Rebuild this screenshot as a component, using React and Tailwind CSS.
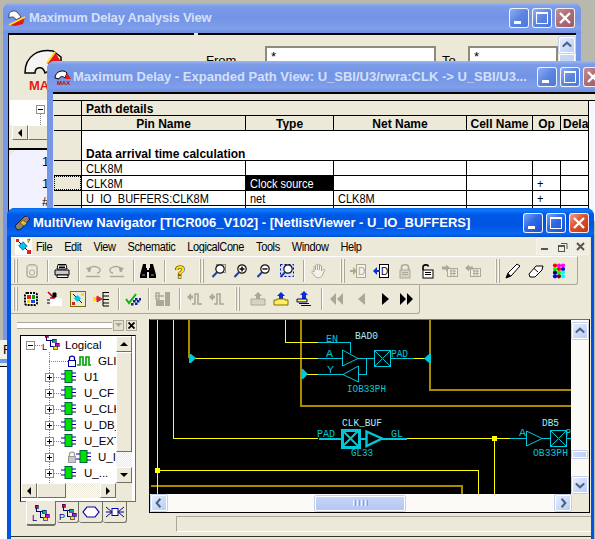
import React from "react";

const SANS = "[font-family:'Liberation_Sans',Arial,sans-serif]";
const DIS = "#aca899";

function TitleButton({ kind, active, className = "" }) {
  const base = active
    ? kind === "close"
      ? "bg-[linear-gradient(135deg,#f0a08a,#e0512c_45%,#c1340f)]"
      : "bg-[linear-gradient(135deg,#7aa5f5,#2f6ae6_45%,#1d4fd0)]"
    : kind === "close"
      ? "bg-[linear-gradient(135deg,#c48e96,#ad6a76_50%,#9c5a6a)]"
      : "bg-[linear-gradient(135deg,#8eaef0,#5c85e2_50%,#4f78d8)]";
  return (
    <div className={`w-[20px] h-[20px] shrink-0 rounded-[3px] border border-white/90 ${base} ${className}`}>
      <svg width="18" height="18" viewBox="0 0 18 18" shapeRendering="crispEdges">
        {kind === "min" && <rect x="4" y="12" width="7" height="3" fill="#fff" />}
        {kind === "max" && (
          <g fill="none" stroke="#fff">
            <rect x="3.5" y="4.5" width="11" height="10" />
            <rect x="3" y="3" width="12" height="2" fill="#fff" stroke="none" />
          </g>
        )}
        {kind === "close" && (
          <path d="M4 4 L14 14 M14 4 L4 14" stroke="#fff" strokeWidth="2.4" shapeRendering="auto" />
        )}
      </svg>
    </div>
  );
}

function LunaArrow({ dir, className = "" }) {
  const paths = {
    up: "M3 9 L7.5 5 L12 9",
    down: "M3 6 L7.5 10 L12 6",
    left: "M9 3 L5 7.5 L9 12",
    right: "M6 3 L10 7.5 L6 12",
  };
  return (
    <div className={`w-[16px] h-[16px] shrink-0 rounded-[2px] border border-white bg-[linear-gradient(135deg,#e4ecfd,#b8cdf8)] shadow-[0_0_0_1px_#c4d0ea] ${className}`}>
      <svg width="14" height="14" viewBox="0 0 15 15">
        <path d={paths[dir]} fill="none" stroke="#4d6185" strokeWidth="2.2" />
      </svg>
    </div>
  );
}

function ClassicArrow({ dir, className = "" }) {
  const p = {
    up: "M3 9 H11 L7 5 Z",
    down: "M3 5 H11 L7 9 Z",
    left: "M9 3 V11 L5 7 Z",
    right: "M5 3 V11 L9 7 Z",
  };
  return (
    <div className={`bg-[#ece9d8] border border-t-white border-l-white border-r-[#716f64] border-b-[#716f64] flex items-center justify-center shrink-0 ${className}`}>
      <svg width="14" height="14" viewBox="0 0 14 14"><path d={p[dir]} fill="#000" /></svg>
    </div>
  );
}

const I = ({ children, className = "" }) => (
  <svg width="16" height="16" viewBox="0 0 16 16" className={`shrink-0 ${className}`}>{children}</svg>
);

const Grip = ({ className = "" }) => (
  <div className={`w-[6px] h-[24px] shrink-0 flex gap-[1px] ${className}`}>
    <div className="w-[2px] h-full bg-[#f8f6ee] border-r border-[#aca899]" />
    <div className="w-[2px] h-full bg-[#f8f6ee] border-r border-[#aca899]" />
  </div>
);
const Sep = ({ className = "" }) => (
  <div className={`w-[2px] h-[22px] shrink-0 border-l border-[#aca899] border-r border-r-white ${className}`} />
);

const Zoom = ({ mark }) => (
  <>
    {mark === "dash" && <rect x="5.5" y="1.5" width="9" height="8" fill="none" stroke="#333" strokeDasharray="1 1" />}
    {mark === "fit" && <rect x="1.5" y="1.5" width="13" height="12" fill="#cfe0ff" stroke="#00a" strokeDasharray="2 2" />}
    <circle cx="9" cy="6" r="4.2" fill="#fff" stroke="#111" strokeWidth="1.2" />
    {mark === "plus" && <path d="M6.5 6 H11.5 M9 3.5 V8.5" stroke="#000" strokeWidth="1.4" />}
    {mark === "minus" && <path d="M6.5 6 H11.5" stroke="#000" strokeWidth="1.4" />}
    <path d="M6 9.2 L1.5 14" stroke="#1c3fa8" strokeWidth="2" />
  </>
);

const Lock = ({ color, open }) => (
  <>
    <path d={open ? "M3 7 V4 C3 1.5 8 1 8.5 3.5" : "M4.5 7 V4 C4.5 1 11.5 1 11.5 4 V7"} fill="none" stroke={color} strokeWidth="1.6" />
    <rect x="3" y="7" width="10" height="8" fill={open ? "#fff" : "#d6d3c4"} stroke={color} />
    <path d="M5 9.5 H11 M5 11.5 H11" stroke={color} />
  </>
);

const GridArrow = ({ left }) => (
  <>
    <rect x="5.5" y="5.5" width="10" height="8" fill="#f0eee2" stroke={DIS} />
    <path d="M8 8 H14 M8 10.5 H14 M9 6 V13 M12 6 V13" stroke={DIS} />
    <path d={left ? "M0 5 L4 1.5 V3.5 H8 V6.5 H4 V8.5 Z" : "M8 5 L4 1.5 V3.5 H0 V6.5 H4 V8.5 Z"} fill={DIS} />
  </>
);

const Pulse = ({ arrow = true }) => (
  <>
    <path d="M5 13 H8 V3 H11 V13 H15" fill="none" stroke={DIS} strokeWidth="1.6" />
    {arrow && <path d="M0 6 L4 2 V4.5 H6 V7.5 H4 V10 Z" fill={DIS} />}
  </>
);

const TreeGlyph = ({ letter }) => (
  <svg width="18" height="18" viewBox="0 0 18 18" className="shrink-0" shapeRendering="crispEdges">
    <path d="M4.5 3 V7.5 H10 M8.5 7.5 V13.5 H11" fill="none" stroke="#000080" />
    <rect x="3" y="1" width="3" height="3" fill="#e00030" stroke="#000080" strokeWidth="0.6" />
    <rect x="10" y="6" width="4" height="3" fill="#00b070" stroke="#000080" strokeWidth="0.6" />
    <rect x="13" y="10" width="4" height="3" fill="#e000c0" stroke="#000080" strokeWidth="0.6" />
    <rect x="11" y="13" width="4" height="3" fill="#ffe000" stroke="#000080" strokeWidth="0.6" />
    <text x="0" y="17" fontSize="9" fill="#0000a0" fontFamily="Liberation Sans">{letter}</text>
  </svg>
);

const Block = () => (
  <svg width="15" height="14" viewBox="0 0 15 14" className="shrink-0">
    <rect x="4" y="0.5" width="7" height="12" fill="#00e000" stroke="#063" />
    <path d="M0 4 H4 M0 9 H4 M11 3 H15 M11 6.5 H15 M11 10 H15" stroke="#00a" />
  </svg>
);

const SmallLock = ({ color, fill }) => (
  <svg width="8" height="12" viewBox="0 0 8 12" className="shrink-0">
    <path d="M1.5 6 V3 C1.5 0.5 6.5 0.5 6.5 3 V6" fill="none" stroke={color} strokeWidth="1.3" />
    <rect x="0.5" y="5.5" width="7" height="6" fill={fill} stroke={color} />
  </svg>
);

const PlusBox = () => (
  <div className="w-[9px] h-[9px] bg-white border border-[#8e8f8f] shrink-0 relative">
    <div className="absolute left-[1px] top-[3px] w-[5px] h-[1px] bg-black" />
    <div className="absolute left-[3px] top-[1px] w-[1px] h-[5px] bg-black" />
  </div>
);
const Dots = () => <div className="w-[7px] border-t border-dotted border-[#808080] shrink-0" />;

const Tall = ({ children, className = "" }) => (
  <span className={`inline-block scale-y-[1.14] ${className}`}>{children}</span>
);

function TreeRow({ label, children }) {
  return (
    <div className="h-[16px] flex items-center pl-[24px] whitespace-nowrap">
      <PlusBox />
      <Dots />
      {children}
      <span className="ml-[8px] leading-[16px]">{label}</span>
    </div>
  );
}

function Schematic() {
  const olive = "#a88c00";
  const yellow = "#ffff00";
  const cyan = "#00c8d8";
  const pale = "#a8f0f4";
  const T = ({ x, y, w, c = cyan, children }) => (
    <text x={x} y={y} fill={c} fontSize="11" fontFamily="Liberation Mono" textLength={w} lengthAdjust="spacingAndGlyphs">{children}</text>
  );
  return (
    <svg width="421" height="174" viewBox="150 320 421 174" className="block bg-black shrink-0" shapeRendering="crispEdges">
      <g fill="none" stroke={olive} strokeWidth="2">
        <path d="M189 320 V358" />
        <path d="M301 320 V405.5 H571" />
        <path d="M430 320 V390 H571" />
        <path d="M151 486 H462 V494" />
      </g>
      <g fill="none" stroke={yellow}>
        <path d="M157.5 320 V494" />
        <path d="M173.5 320 V438.5 H318" />
        <path d="M191 358.5 H318" />
        <path d="M285.5 320 V342.5 H318" />
        <path d="M303 374.5 H318" />
        <path d="M414 358.5 H427" />
        <path d="M407 438.5 H510" />
        <path d="M494.5 438 V494" />
        <path d="M157 470.5 H478.5 V494" />
      </g>
      <rect x="155" y="468" width="5" height="5" fill={yellow} />
      <rect x="492" y="436" width="5" height="5" fill={yellow} />
      <g fill={cyan}>
        <path d="M189 354 H191 L196 358 L191 363 H189 Z" shapeRendering="auto" />
        <path d="M301 369 H303 L308 374 L303 379 H301 Z" shapeRendering="auto" />
        <path d="M431 354 V363 H429 L424 358.5 L429 354 Z" shapeRendering="auto" />
      </g>
      <g fill="none" stroke={cyan}>
        <path d="M318 342.5 H350.5 V353" />
        <path d="M318 358.5 H342" />
        <path d="M342.5 350 V366 L358 358.5 Z" shapeRendering="auto" />
        <path d="M358 358.5 H374" />
        <rect x="374.5" y="350.5" width="16" height="16" />
        <path d="M374.5 350.5 L390.5 366.5 M390.5 350.5 L374.5 366.5" shapeRendering="auto" />
        <path d="M390 358.5 H414" />
        <path d="M318 374.5 H343" />
        <path d="M358.5 366 V382 L343 374.5 Z" shapeRendering="auto" />
        <path d="M358 374.5 H366.5 V358.5" />
        <path d="M510 438.5 H526" />
        <path d="M526.5 431 V446 L542 438.5 Z" shapeRendering="auto" />
        <path d="M542 438.5 H550" />
        <rect x="550.5" y="430.5" width="16" height="16" />
        <path d="M550.5 430.5 L566.5 446.5 M566.5 430.5 L550.5 446.5" shapeRendering="auto" />
        <path d="M566 438.5 H571" />
      </g>
      <g fill="none" stroke={cyan} strokeWidth="2">
        <path d="M319 438.5 H342" />
        <rect x="342" y="430" width="17" height="17" strokeWidth="3" />
        <path d="M343 431 L358 446 M358 431 L343 446" shapeRendering="auto" />
        <path d="M359 438.5 H366" />
        <path d="M366.5 431.5 V446 L382 438.5 Z" strokeWidth="2.4" shapeRendering="auto" />
        <path d="M382 438.5 H407" />
      </g>
      <T x={326} y={342} w={12}>EN</T>
      <T x={355} y={339} w={23} c={pale}>BAD0</T>
      <T x={326} y={357} w={7}>A</T>
      <T x={391} y={357} w={17}>PAD</T>
      <T x={327} y={373} w={7}>Y</T>
      <T x={347} y={392} w={39}>IOB33PH</T>
      <T x={342} y={426} w={40} c={pale}>CLK_BUF</T>
      <T x={317} y={437} w={18}>PAD</T>
      <T x={391} y={437} w={12}>GL</T>
      <T x={351} y={456} w={22}>GL33</T>
      <T x={542} y={426} w={17} c={pale}>DB5</T>
      <T x={519} y={436} w={7}>A</T>
      <T x={566} y={436} w={5}>P</T>
      <T x={533} y={456} w={35}>OB33PH</T>
    </svg>
  );
}

const inactiveTitle =
  "bg-[linear-gradient(180deg,#9db6f0_0%,#7b9be8_12%,#7394e6_50%,#7f9fea_85%,#6f8fe0_100%)]";
const activeTitle =
  "bg-[linear-gradient(180deg,#0a66e8_0%,#0a7af8_8%,#0058e6_22%,#0054e3_60%,#0468f2_88%,#0050d0_100%)]";

function Window1() {
  return (
    <div className={`absolute left-[3px] top-[3px] w-[578px] h-[337px] rounded-t-[8px] bg-[#7697e7] overflow-hidden flex flex-col ${SANS}`}>
      <div className={`h-[30px] shrink-0 flex items-center pl-[5px] pr-[6px] ${inactiveTitle}`}>
        <svg width="18" height="18" viewBox="0 0 18 18" className="shrink-0">
          <path d="M1 6 C1 2 6 1 9 3 L13 8 L8 11 C7 8 4 7 1 9 Z" fill="#fff" stroke="#000" strokeWidth="0.6" />
          <path d="M1 16 L17 8 L15 15 L7 17 Z" fill="#e81818" />
          <path d="M1 16 L17 8" stroke="#ffe020" strokeWidth="1.6" />
        </svg>
        <span className="ml-[3px] text-[13px] tracking-[-0.2px] font-bold text-[#d4e0fa] whitespace-nowrap">Maximum Delay Analysis View</span>
        <div className="ml-auto flex gap-[3px]">
          <TitleButton kind="min" />
          <TitleButton kind="max" />
          <TitleButton kind="close" />
        </div>
      </div>
      <div className="flex-1 flex mx-[5px] gap-[4px] bg-[#ece9d8] min-h-0">
        <div className="w-[186px] shrink-0 flex flex-col border-t-2 border-l border-black">
          <div className="h-[65px] shrink-0 relative pl-[14px] pt-[12px]">
            <svg width="40" height="30" viewBox="0 0 40 30">
              <path d="M2 26 C2 8 16 2 30 4 L38 10 L38 18 L22 26 C20 18 12 20 12 26 Z" fill="#f4f4f0" stroke="#000" strokeWidth="1.5" />
              <path d="M32 5 L24 16 L30 24 L44 24 Z" fill="#e81818" />
              <path d="M32 5 L24 16" stroke="#ffe020" strokeWidth="2" />
            </svg>
            <span className="absolute left-[20px] top-[41px] text-[13px] font-bold text-[#e81818]">MAX</span>
          </div>
          <div className="h-[25px] shrink-0 bg-white relative ml-[1px]">
            <div className="absolute left-[26px] top-[5px] w-[9px] h-[9px] border border-[#8e8f8f] bg-white">
              <div className="mt-[3px] ml-[1px] w-[5px] h-[1px] bg-black" />
            </div>
            <div className="absolute left-[30px] top-[14px] h-[11px] border-l border-dotted border-[#808080]" />
          </div>
          <div className="h-[15px] shrink-0 flex pl-[3px]">
            <ClassicArrow dir="left" className="w-[16px] h-[15px]" />
            <div className="w-[40px] h-[15px] bg-[#ece9d8] border border-t-white border-l-white border-r-[#716f64] border-b-[#716f64]" />
          </div>
          <div className="h-[10px] shrink-0 border-b-2 border-black" />
          <div className="flex-1 bg-[#f1f1ff] rounded-tl-[10px] text-[13px] text-black pl-[33px] pt-[2px] leading-none">
            <div className="h-[22px] pt-[3px]">1</div>
            <div className="h-[21px] pt-[3px]">1</div>
            <div>#</div>
          </div>
        </div>
        <div className="flex-1 border-t-2 border-black flex items-start pl-[8px] pt-[11px] text-[13px] text-black">
          <span className="w-[59px] pt-[5px]">From</span>
          <div className="w-[171px] h-[40px] bg-white border-2 border-[#8e8b7c] pl-[4px] leading-[18px]">*</div>
          <span className="w-[32px] pl-[6px] pt-[5px]">To</span>
          <div className="w-[90px] h-[40px] bg-white border-2 border-[#8e8b7c] pl-[4px] leading-[18px]">*</div>
          <div className="ml-[1px] -mt-[9px] w-[16px] flex flex-col gap-[1px]">
            <LunaArrow dir="up" />
            <div className="h-[30px] bg-[#c6d5f6] border border-white" />
          </div>
        </div>
      </div>
    </div>
  );
}

function Cell({ children, className = "" }) {
  return (
    <div className={`px-[4px] leading-[14px] whitespace-nowrap overflow-hidden ${className}`}>
      <Tall>{children}</Tall>
    </div>
  );
}

function Window2() {
  const head = "bg-[#ece9d8] font-bold text-center text-[12px]";
  const w = "bg-white";
  const rh = "bg-[#ece9d8]";
  return (
    <div className={`absolute left-[47px] top-[61px] w-[560px] h-[160px] rounded-t-[8px] bg-[#7697e7] overflow-hidden flex flex-col ${SANS}`}>
      <div className={`h-[31px] shrink-0 flex items-center pl-[7px] ${inactiveTitle}`}>
        <svg width="18" height="18" viewBox="0 0 18 18" className="shrink-0">
          <path d="M1 10 C1 3 10 1 13 5 L11 10 C9 8 6 8 5 11 Z" fill="#fff" stroke="#000" />
          <path d="M13 5 L17 11 L11 11 Z" fill="#e81818" />
          <text x="3" y="17" fontSize="6" fontWeight="700" fill="#c00" fontFamily="Liberation Sans">MAX</text>
        </svg>
        <span className="ml-[1px] text-[13px] font-bold text-[#d4e0fa] whitespace-nowrap w-[460px] shrink-0">Maximum Delay - Expanded Path View: U_SBI/U3/rwra:CLK -&gt; U_SBI/U3...</span>
        <div className="ml-[4px] flex gap-[3px]">
          <TitleButton kind="min" />
          <TitleButton kind="max" />
          <TitleButton kind="close" />
        </div>
      </div>
      <div className="ml-[6px] flex-1 bg-[#ece9d8] border-t-2 border-black flex flex-col min-h-0">
        <div className="h-[7px] shrink-0 border-b border-black" />
        <div className="flex">
          <div className="ml-[1px] shrink-0 grid bg-black gap-[1px] text-[11px] text-black grid-cols-[27px_163px_87px_132px_65px_27px_27px] grid-rows-[14px_14px_29px_14px_14px_14px_14px] border-r border-black">
            <div className={rh} />
            <Cell className="col-span-6 bg-[#ece9d8] font-bold text-[12px]">Path details</Cell>
            <div className={rh} />
            <Cell className={head}>Pin Name</Cell>
            <Cell className={head}>Type</Cell>
            <Cell className={head}>Net Name</Cell>
            <Cell className={`${head} !px-0`}>Cell Name</Cell>
            <Cell className={`${head} !px-0`}>Op</Cell>
            <Cell className="bg-[#ece9d8] font-bold text-[12px] !px-[2px]">Delay</Cell>
            <div className={rh} />
            <Cell className="col-span-6 bg-white font-bold text-[12px] pt-[15px]">Data arrival time calculation</Cell>
            <div className={rh} />
            <Cell className={w}>CLK8M</Cell>
            <div className={w} /><div className={w} /><div className={w} /><div className={w} /><div className={w} />
            <div className="bg-[#ece9d8] border border-dotted border-black" />
            <Cell className={w}>CLK8M</Cell>
            <Cell className="bg-black text-white">Clock source</Cell>
            <div className={w} /><div className={w} />
            <Cell className={w}>+</Cell>
            <div className={w} />
            <div className={rh} />
            <Cell className={w}>U_IO_BUFFERS:CLK8M</Cell>
            <Cell className={w}>net</Cell>
            <Cell className={w}>CLK8M</Cell>
            <div className={w} />
            <Cell className={w}>+</Cell>
            <div className={w} />
            <div className={rh} />
            <div className={w} /><div className={w} /><div className={w} /><div className={w} /><div className={w} /><div className={w} />
          </div>
          <div className="flex-1 bg-[#f6f8fd]" />
        </div>
      </div>
    </div>
  );
}

function ToolbarOne() {
  return (
    <div className="h-[29px] w-[567px] shrink-0 flex items-center border-b border-r border-[#aca899] rounded-br-[3px] border-t border-t-white">
      <Grip className="ml-[2px]" />
      <I className="ml-[5px]"><ellipse cx="8" cy="3.5" rx="5" ry="2" fill="#d6d3c4" stroke={DIS} /><path d="M3 3.5 V12 C3 15 13 15 13 12 V3.5" fill="#ece9d8" stroke={DIS} strokeWidth="1.3" /><rect x="5.5" y="7" width="5" height="5" rx="2" fill="none" stroke={DIS} /></I>
      <Sep className="ml-[7px]" />
      <I className="ml-[5px]"><path d="M4 1.5 H12 L13 6 H3 Z" fill="#fff" stroke="#000" /><path d="M1 7 H15 V12 H1 Z" fill="#c8c8c8" stroke="#000" /><path d="M3 12 H14 V14.5 H3 Z" fill="#fff" stroke="#000" /><path d="M5 3 H11 M5 4.5 H11" stroke="#000" /></I>
      <Sep className="ml-[8px]" />
      <I className="ml-[5px]"><path d="M4 9 C1 4 9 2 14 5 C16 7 15 10 12 10" fill="none" stroke={DIS} strokeWidth="1.3" /><path d="M1 5 L5 9.5 L6.5 4 Z" fill={DIS} /><path d="M1 13.5 H15" stroke={DIS} strokeWidth="1.4" /></I>
      <I className="ml-[8px]"><path d="M12 9 C15 4 7 2 2 5 C0 7 1 10 4 10" fill="none" stroke={DIS} strokeWidth="1.3" /><path d="M15 5 L11 9.5 L9.5 4 Z" fill={DIS} /><path d="M1 13.5 H15" stroke={DIS} strokeWidth="1.4" /></I>
      <Sep className="ml-[8px]" />
      <I className="ml-[5px]"><path d="M3 1 H6 V5 H7 V7 H9 V5 H10 V1 H13 L16 12 V15 H9 V9 H7 V15 H0 V12 Z" fill="#000" /><rect x="2" y="11" width="3" height="2" fill="#4a4a4a" /><rect x="11" y="11" width="3" height="2" fill="#4a4a4a" /></I>
      <Sep className="ml-[8px]" />
      <I className="ml-[6px]"><text x="8" y="14.5" textAnchor="middle" fontSize="17" fontWeight="700" fill="#ffe800" stroke="#000" strokeWidth="0.9" paintOrder="stroke" fontFamily="Liberation Sans">?</text></I>
      <Grip className="ml-[11px]" />
      <I className="ml-[6px]"><Zoom mark="dash" /></I>
      <I className="ml-[6px]"><Zoom mark="plus" /></I>
      <I className="ml-[7px]"><Zoom mark="minus" /></I>
      <I className="ml-[7px]"><Zoom mark="fit" /></I>
      <Sep className="ml-[8px]" />
      <I className="ml-[5px]"><path d="M4 9 V4 C4 3 5.5 3 5.5 4 V7 V2.5 C5.5 1.5 7.5 1.5 7.5 2.5 V7 V2 C7.5 1 9.5 1 9.5 2 V7 V3 C9.5 2 11.5 2 11.5 3 V8 L13 6.5 C14 5.5 15 6.5 14.5 7.5 L12 13 C11 15 6 15.5 5 13 L2 9.5 C1.5 8 3 7.5 4 9 Z" fill="#f4f2e8" stroke={DIS} /></I>
      <Grip className="ml-[14px]" />
      <I className="ml-[4px]"><rect x="6.5" y="1.5" width="9" height="13" fill="#f4f2e8" stroke={DIS} /><text x="8" y="12" fontSize="10" fill={DIS} fontFamily="Liberation Sans">D</text><path d="M0 7 H3 V4 L7 8 L3 12 V9 H0 Z" fill={DIS} /></I>
      <I className="ml-[7px]"><rect x="6.5" y="1.5" width="9" height="13" fill="#fff" stroke="#000" /><text x="8" y="12" fontSize="10" fill="#000" fontFamily="Liberation Sans">D</text><path d="M7 7 H4 V4 L0 8 L4 12 V9 H7 Z" fill="#0a2fd0" /></I>
      <I className="ml-[8px]"><Lock color={DIS} /></I>
      <I className="ml-[7px]"><Lock color="#000" open /></I>
      <I className="ml-[6px]"><GridArrow /></I>
      <I className="ml-[7px]"><GridArrow left /></I>
      <Grip className="ml-[14px]" />
      <I className="ml-[4px]"><path d="M1 15 L3 10 L12 1 L15 3 L6 13 Z" fill="#fff" stroke="#000" /><path d="M1 15 L3 10 L6 13 Z" fill="#000" /></I>
      <I className="ml-[7px]"><path d="M1 11 L8 3 H15 L14 7 L7 14 H2 Z" fill="#fff" stroke="#000" /><path d="M6 5.5 L10 9" stroke="#000" /></I>
      <I className="ml-[7px]">
        {[["#ff0000","#ff00ff","#ff00ff"],["#00ff00","#ff0000","#0000ff"],["#000080","#00ff00","#00ffff"],["#0000ff","#800000","#00ffff"]].map((r, y) =>
          r.map((c, x) => <circle key={`${x}-${y}`} cx={4 + x * 4} cy={2.5 + y * 3.6} r="2.1" fill={c} />)
        )}
      </I>
    </div>
  );
}

function ToolbarTwo() {
  return (
    <div className="h-[29px] w-[409px] shrink-0 flex items-center border-b border-r border-[#aca899] rounded-br-[3px]">
      <Grip className="ml-[2px]" />
      <I className="ml-[4px]"><rect x="2" y="2" width="12" height="12" rx="2" fill="#fff" stroke="#000" strokeWidth="2" strokeDasharray="2 1" /><rect x="4" y="4" width="4" height="4" fill="#e02020" /><rect x="9" y="4" width="3" height="4" fill="#00a000" /><rect x="4" y="9" width="3" height="3" fill="#ffd000" /><rect x="8" y="9" width="4" height="3" fill="#2040e0" /></I>
      <I className="ml-[8px]"><rect x="3" y="7" width="12" height="8" fill="#fff" /><path d="M1 1 L7 7 M7 3 V7 H3" stroke="#b00020" strokeWidth="1.6" fill="none" /><path d="M0 9 H3 M0 12 H3 M6 2 H9 V6 H6 Z" fill="#000" stroke="#000" /></I>
      <I className="ml-[7px]"><rect x="0.5" y="0.5" width="15" height="15" fill="#ece9d8" stroke="#707000" /><path d="M3 3 L12 12" stroke="#00a" /><rect x="5" y="5" width="5" height="5" transform="rotate(45 7.5 7.5)" fill="#00c8e0" /><rect x="11" y="2" width="3" height="3" fill="#ffe000" /><rect x="2" y="11" width="3" height="3" fill="#e02020" /></I>
      <I className="ml-[7px]"><path d="M0 8 H4 V5 L9 8 L4 11 V8" fill="#e02020" stroke="#e02020" /><rect x="0" y="6" width="3" height="4" fill="#ffe000" /><path d="M10 1 V15 M10 1.5 H16 M10 5 H16 M10 8.5 H16 M10 12 H16 M10 15 H16" stroke="#000" fill="none" /></I>
      <Sep className="ml-[9px]" />
      <I className="ml-[5px]"><path d="M1 8 L4 12 L11 3" fill="none" stroke="#10b010" strokeWidth="2" /><g fill="#0a2a90"><rect x="8" y="9" width="2.5" height="2.5" /><rect x="12" y="9" width="2.5" height="2.5" /><rect x="10" y="7" width="2.5" height="2.5" /><rect x="14" y="7" width="2" height="2.5" /><rect x="10" y="11.5" width="2.5" height="2.5" /><rect x="6" y="12" width="2.5" height="2.5" /></g></I>
      <Sep className="ml-[7px]" />
      <I className="ml-[5px]"><path d="M1 5 H9 M1 2 H4 V8 H1 Z" stroke={DIS} fill="none" strokeWidth="1.4" /><rect x="10" y="1" width="5" height="14" fill={DIS} /><rect x="1" y="9" width="8" height="6" fill={DIS} /></I>
      <Sep className="ml-[8px]" />
      <I className="ml-[6px]"><Pulse /></I>
      <I className="ml-[6px]"><Pulse /></I>
      <Grip className="ml-[10px]" />
      <I className="ml-[9px]"><path d="M8 1 L12 5 H10 V9 H6 V5 H4 Z" fill={DIS} /><path d="M1 8 H15 V14 H1 Z" fill="#d6d3c4" stroke={DIS} /></I>
      <I className="ml-[7px]"><path d="M8 1 L12 5 H10 V9 H6 V5 H4 Z" fill="#0a2fd0" /><path d="M1 9 H4 V8 H12 V9 H15 V14 H1 Z" fill="#ffee60" stroke="#807000" /></I>
      <I className="ml-[7px]"><path d="M8 0 L12 4 H10 V8 H6 V4 H4 Z" fill="#0a2fd0" /><path d="M1 8 H11 V11 H1 Z" fill="#ffee60" stroke="#000080" /><path d="M3 12.5 H13 M5 14.5 H15" stroke="#000080" /></I>
      <Sep className="ml-[9px]" />
      <I className="ml-[6px]"><path d="M7 2 V14 L1 8 Z M14 2 V14 L8 8 Z" fill={DIS} /></I>
      <I className="ml-[9px]"><path d="M11 2 V14 L4 8 Z" fill={DIS} /></I>
      <I className="ml-[8px]"><path d="M4 2 V14 L11 8 Z" fill="#000" /></I>
      <I className="ml-[4px]"><path d="M2 2 V14 L8 8 Z M9 2 V14 L15 8 Z" fill="#000" /></I>
    </div>
  );
}

function TreePanel() {
  return (
    <div className="w-[136px] shrink-0 flex flex-col bg-[#ece9d8] relative">
      <div className="h-[21px] shrink-0 flex items-center pl-[6px] pt-[2px]">
        <div className="w-[95px] h-[7px] border-y border-[#aca899] bg-white" />
        <div className="ml-[1px] w-[11px] h-[11px] border border-[#aca899] bg-[#e4e1d0] flex items-center justify-center">
          <svg width="7" height="5" viewBox="0 0 7 5"><path d="M0 0 H7 L3.5 4 Z" fill={DIS} /></svg>
        </div>
        <div className="ml-[2px] w-[11px] h-[11px] border border-[#aca899] bg-[#ece9d8] flex items-center justify-center">
          <svg width="7" height="7" viewBox="0 0 7 7"><path d="M0.5 0.5 L6.5 6.5 M6.5 0.5 L0.5 6.5" stroke="#000" strokeWidth="1.8" /></svg>
        </div>
      </div>
      <div className="ml-[9px] w-[116px] h-[167px] shrink-0 border border-[#716f64] border-t-black border-l-black bg-white flex">
        <div className="w-[95px] shrink-0 flex flex-col">
          <div className={`h-[147px] shrink-0 overflow-hidden text-[11.5px] text-black relative pt-[1px] ${SANS}`}>
            <div className="absolute left-[28px] top-[16px] h-[131px] border-l border-dotted border-[#808080]" />
            <div className="h-[16px] flex items-center pl-[5px] whitespace-nowrap relative">
              <div className="w-[9px] h-[9px] bg-white border border-[#8e8f8f] shrink-0">
                <div className="mt-[3px] ml-[1px] w-[5px] h-[1px] bg-black" />
              </div>
              <Dots />
              <div className="-mt-[6px]"><TreeGlyph letter="L" /></div>
              <span className="ml-[5px] leading-[16px]">Logical</span>
            </div>
            <div className="h-[16px] flex items-center pl-[28px] whitespace-nowrap relative">
              <div className="w-[19px] border-t border-dotted border-[#808080] shrink-0" />
              <SmallLock color="#0000a0" fill="#fff" />
              <svg width="14" height="12" viewBox="0 0 14 12" className="ml-[1px] shrink-0"><path d="M0 10 H3 V2 H6 V10 H9 V2 H12 V10 H14" fill="none" stroke="#00a000" strokeWidth="1.6" /></svg>
              <span className="ml-[7px] leading-[16px]">GLI</span>
            </div>
            <TreeRow label="U1"><Block /></TreeRow>
            <TreeRow label="U_CF"><Block /></TreeRow>
            <TreeRow label="U_CLK"><Block /></TreeRow>
            <TreeRow label="U_DB_"><Block /></TreeRow>
            <TreeRow label="U_EXT"><Block /></TreeRow>
            <div className="h-[16px] flex items-center pl-[24px] whitespace-nowrap">
              <PlusBox />
              <div className="w-[14px] shrink-0" />
              <SmallLock color="#9a9a9a" fill="#c8c8c8" />
              <Block />
              <span className="ml-[7px] leading-[16px]">U_I</span>
            </div>
            <TreeRow label="U_...">
              <Block />
            </TreeRow>
          </div>
          <div className="h-[15px] shrink-0 flex bg-[#ece9d8]">
            <ClassicArrow dir="left" className="w-[16px] h-[15px]" />
            <div className="w-[29px] bg-[#ece9d8] border border-t-white border-l-white border-r-[#716f64] border-b-[#716f64]" />
            <div className="flex-1 bg-[repeating-conic-gradient(#ece9d8_0_25%,#fff_0_50%)] bg-[length:2px_2px]" />
            <ClassicArrow dir="right" className="w-[16px] h-[15px]" />
          </div>
        </div>
        <div className="w-[16px] shrink-0 flex flex-col bg-[#ece9d8]">
          <ClassicArrow dir="up" className="w-[16px] h-[16px]" />
          <div className="h-[100px] shrink-0 bg-[#ece9d8] border border-t-white border-l-white border-r-[#716f64] border-b-[#716f64]" />
          <div className="h-[15px] shrink-0 bg-[repeating-conic-gradient(#ece9d8_0_25%,#fff_0_50%)] bg-[length:2px_2px]" />
          <ClassicArrow dir="down" className="w-[16px] h-[16px]" />
        </div>
      </div>
      <div className="ml-[15px] flex items-start h-[23px]">
        <div className="w-[30px] h-[25px] bg-[#ece9d8] border-l border-l-white border-r border-r-[#716f64] border-b-2 border-b-[#716f64] rounded-b-[3px] flex items-center justify-center -mt-[1px]">
          <TreeGlyph letter="L" />
        </div>
        <div className="w-[22px] h-[21px] ml-[1px] border-r border-r-[#716f64] border-b border-b-[#716f64] rounded-b-[3px] flex items-center justify-center">
          <TreeGlyph letter="P" />
        </div>
        <div className="w-[24px] h-[21px] border-r border-r-[#716f64] border-b border-b-[#716f64] rounded-b-[3px] flex items-center justify-center">
          <svg width="18" height="12" viewBox="0 0 18 12"><path d="M5 1 H13 L17 6 L13 11 H5 L1 6 Z" fill="#fff" stroke="#00a" strokeWidth="1.2" /></svg>
        </div>
        <div className="w-[24px] h-[21px] border-r border-r-[#716f64] border-b border-b-[#716f64] rounded-b-[3px] flex items-center justify-center">
          <svg width="18" height="12" viewBox="0 0 18 12"><rect x="6" y="2.5" width="6" height="7" fill="#fff" stroke="#00a" /><path d="M0 1 L6 6 L0 11 M18 1 L12 6 L18 11 M0 6 H6 M12 6 H18" fill="none" stroke="#008" /></svg>
        </div>
      </div>
    </div>
  );
}

function Window3() {
  return (
    <div className={`absolute left-[7px] top-[208px] w-[587px] h-[340px] rounded-t-[8px] bg-[#0054e3] overflow-hidden flex flex-col ${SANS}`}>
      <div className={`h-[29px] shrink-0 flex items-center pl-[7px] pr-[5px] ${activeTitle}`}>
        <svg width="18" height="18" viewBox="0 0 18 18" className="shrink-0">
          <path d="M1 12 L11 2 L16 5 L7 15 L3 16 Z" fill="#8a8270" stroke="#222" />
          <path d="M9 6 L13 9 L10 12 L6 9 Z" fill="#e0c020" stroke="#222" strokeWidth="0.5" />
          <rect x="11" y="3" width="3" height="3" fill="#d050a0" />
        </svg>
        <span className="ml-[1px] text-[13px] font-bold text-white whitespace-nowrap">MultiView Navigator [TICR006_V102] - [NetlistViewer - U_IO_BUFFERS]</span>
        <div className="ml-auto flex gap-[3px]">
          <TitleButton kind="min" active />
          <TitleButton kind="max" active />
          <TitleButton kind="close" active />
        </div>
      </div>
      <div className="mx-[4px] w-[580px] bg-[#ece9d8] flex flex-col flex-1 min-h-0">
        <div className="h-[19px] shrink-0 flex items-center text-[11px] tracking-[-0.4px] text-black">
          <svg width="17" height="17" viewBox="0 0 17 17" className="ml-[4px] shrink-0">
            <rect width="17" height="17" fill="#fff" />
            <path d="M2 2 L14 14" stroke="#000" />
            <rect x="5" y="5" width="6" height="6" transform="rotate(45 8 8)" fill="#00c8e0" stroke="#006" strokeWidth="0.5" />
            <rect x="1" y="1" width="3" height="3" fill="#e02020" />
            <rect x="12" y="12" width="4" height="4" fill="#e02020" />
            <path d="M12 2 L15 1 L13 5" fill="#ffe000" stroke="#000" strokeWidth="0.5" />
          </svg>
          <Tall className="ml-[4px]">File</Tall>
          <Tall className="ml-[12px]">Edit</Tall>
          <Tall className="ml-[12px]">View</Tall>
          <Tall className="ml-[12px]">Schematic</Tall>
          <Tall className="ml-[12px]">LogicalCone</Tall>
          <Tall className="ml-[12px]">Tools</Tall>
          <Tall className="ml-[12px]">Window</Tall>
          <Tall className="ml-[12px]">Help</Tall>
          <div className="ml-auto mr-[2px] flex gap-[1px]">
            {[
              <path key="m" d="M4 10 H11" stroke="#555" strokeWidth="2" />,
              <g key="r" fill="none" stroke="#555"><rect x="3.5" y="6.5" width="6" height="6" /><path d="M6 4.5 H12 V10" /><path d="M3.5 7 H9.5" strokeWidth="2" /></g>,
              <path key="c" d="M4 4 L11 11 M11 4 L4 11" stroke="#555" strokeWidth="2" />,
            ].map((g, i) => (
              <div key={i} className="w-[17px] h-[17px] bg-[#f0eee2] border border-[#f6f4ea] flex items-center justify-center">
                <svg width="15" height="15" viewBox="0 0 15 15">{g}</svg>
              </div>
            ))}
          </div>
        </div>
        <ToolbarOne />
        <ToolbarTwo />
        <div className="flex h-[199px] shrink-0">
          <TreePanel />
          <div className="ml-[2px] w-[441px] shrink-0 mt-[5px] border border-t-[#716f64] border-l-black border-r-black border-b-black flex flex-col bg-[#ece9d8]">
            <div className="flex h-[174px] shrink-0">
              <Schematic />
              <div className="w-[17px] shrink-0 bg-[#fbfaf6] flex flex-col items-center pt-[3px] pb-[1px]">
                <LunaArrow dir="up" />
                <div className="mt-[112px] w-[15px] h-[7px] rounded-[1px] bg-[linear-gradient(90deg,#d0dcfa,#c0d0f6)] border border-white shadow-[0_0_0_1px_#c4d0ea]" />
                <div className="flex-1" />
                <LunaArrow dir="down" />
              </div>
            </div>
            <div className="h-[18px] shrink-0 flex">
              <div className="w-[421px] bg-[#fbfaf6] flex items-center pl-[1px]">
                <LunaArrow dir="left" />
                <div className="ml-[148px] w-[90px] h-[15px] rounded-[2px] border border-white bg-[linear-gradient(180deg,#c6d4f8,#b4c8f6)] shadow-[0_0_0_1px_#c4d0ea] flex items-center justify-center gap-[1px]">
                  <div className="w-[1px] h-[6px] bg-[#eef2fd]" /><div className="w-[1px] h-[6px] bg-[#8aa0d8]" />
                  <div className="w-[1px] h-[6px] bg-[#eef2fd]" /><div className="w-[1px] h-[6px] bg-[#8aa0d8]" />
                  <div className="w-[1px] h-[6px] bg-[#eef2fd]" /><div className="w-[1px] h-[6px] bg-[#8aa0d8]" />
                  <div className="w-[1px] h-[6px] bg-[#eef2fd]" /><div className="w-[1px] h-[6px] bg-[#8aa0d8]" />
                </div>
                <div className="flex-1" />
                <LunaArrow dir="right" />
              </div>
            </div>
          </div>
        </div>
        <div className="h-[23px] shrink-0 pl-[165px] pt-[3px]">
          <div className="h-[16px] border-t border-l border-b border-t-[#aca899] border-l-[#aca899] border-b-white" />
        </div>
        <div className="h-[1px] bg-[#333] shrink-0" />
      </div>
    </div>
  );
}

function BackWindowStrip() {
  return (
    <div className={`absolute left-0 top-[340px] w-[7px] h-[199px] overflow-hidden flex flex-col text-[13px] text-black ${SANS}`}>
      <div className="h-[19px] shrink-0 bg-[#f4f3ea] pl-[3px] leading-[19px]">R</div>
      <div className="h-[4px] shrink-0 bg-[#7697e7]" />
      <div className="h-[3px] shrink-0 bg-[#ece9d8]" />
      <div className="h-[1px] shrink-0 bg-black" />
      <div className="flex-1 bg-white" />
    </div>
  );
}

export default function App() {
  return (
    <div className="relative w-[595px] h-[539px] overflow-hidden bg-[#b8b8ac]">
      <Window1 />
      <BackWindowStrip />
      <Window2 />
      <Window3 />
    </div>
  );
}
